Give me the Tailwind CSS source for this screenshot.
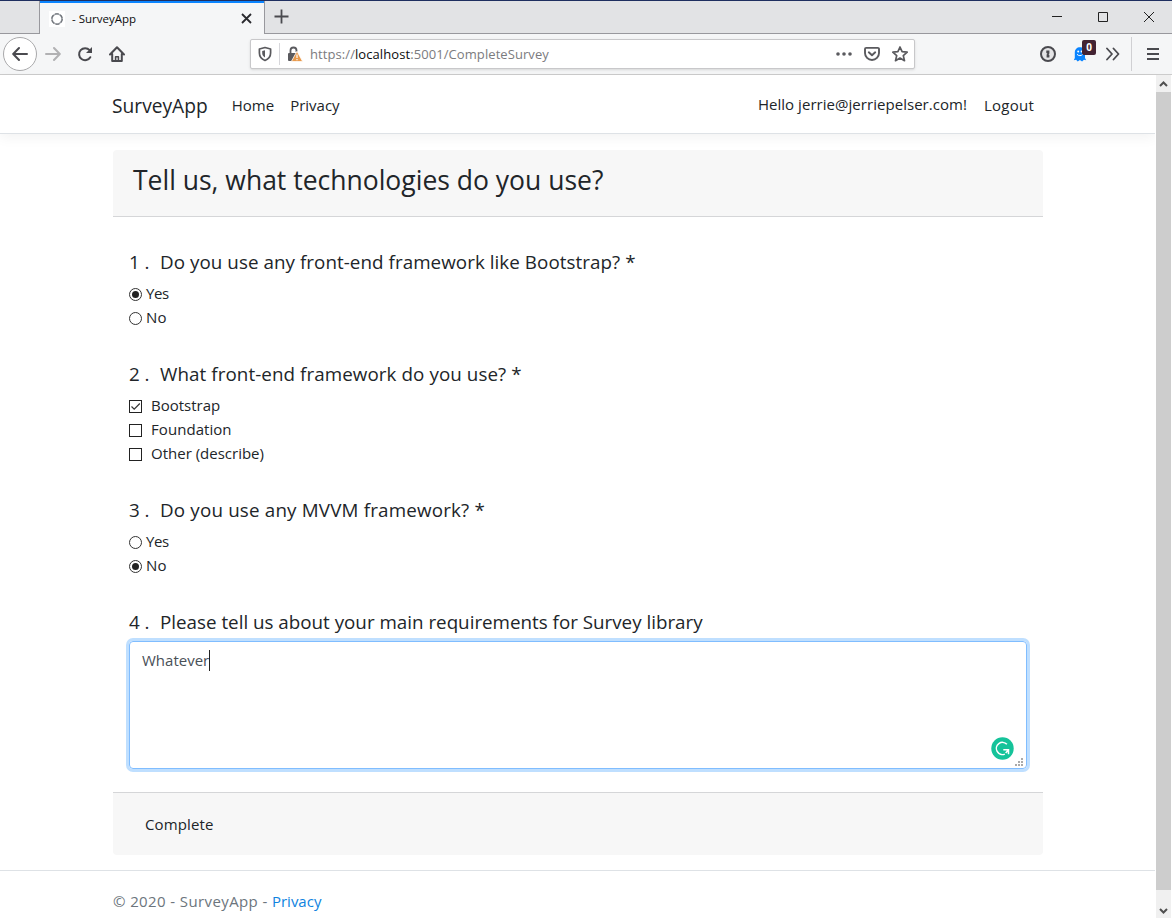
<!DOCTYPE html>
<html lang="en">
<head>
<meta charset="utf-8">
<title>SurveyApp</title>
<script src="https://cdn.jsdelivr.net/npm/@tailwindcss/browser@4"></script>
</head>
<body class="w-[1172px] h-[918px] overflow-hidden bg-white font-['Open_Sans',sans-serif] text-[15px] text-[#212529] flex flex-col">
  <!-- Tab strip -->
  <div class="h-[34px] shrink-0 flex bg-[#e2e3e5] border-t border-t-[#1f2f60]">
    <div class="w-10 border-b border-b-[#98989d] border-r border-r-[#98989d]"></div>
    <div class="w-[224px] bg-[#f5f6f7] border-t-2 border-t-[#0a84ff] flex items-center pl-[9px] pr-3">
      <svg class="w-4 h-4 bg-white" viewBox="0 0 16 16" fill="none"><circle cx="8" cy="8" r="5" stroke="#a9adb2" stroke-width="1.600"/><circle cx="8" cy="8" r="5.300" stroke="#6b6f75" stroke-width="1.100" stroke-dasharray="4 1.550"/></svg>
      <span class="ml-[7px] text-[11.5px] whitespace-nowrap text-[#0c0c0d]">- SurveyApp</span>
      <svg class="ml-auto w-[11px] h-[11px]" viewBox="0 0 11 11" stroke="#2a2a2e" stroke-width="1.800"><path d="M1 1l9 9M10 1l-9 9"/></svg>
    </div>
    <div class="flex-1 flex items-center border-b border-l border-[#98989d]">
      <svg class="ml-[9px] w-[15px] h-[15px] -mt-px" viewBox="0 0 15 15" stroke="#4a4a4f" stroke-width="1.800"><path d="M7.500 .5v14M.5 7.500h14"/></svg>
      <svg class="ml-auto w-[11px] h-[11px] -mt-px" viewBox="0 0 11 11" stroke="#222" stroke-width="1"><path d="M0 5.500h10"/></svg>
      <svg class="ml-[35px] w-[11px] h-[11px]" viewBox="0 0 11 11" fill="none" stroke="#222"><path d="M.5 .5h9v9h-9z"/></svg>
      <svg class="ml-[35px] mr-[17px] w-[11px] h-[11px]" viewBox="0 0 11 11" stroke="#222" stroke-width="1"><path d="M0 0l10 10M10 0L0 10"/></svg>
    </div>
  </div>
  <!-- Toolbar -->
  <div class="h-[41px] shrink-0 flex items-center bg-[#f5f6f7] border-b border-b-[#ccc]">
    <div class="ml-[3px] w-[34px] h-[34px] rounded-full bg-white border border-[#a9a9ab] flex items-center justify-center">
      <svg class="w-4 h-4" viewBox="0 0 16 16" fill="none" stroke="#4a4a4f" stroke-width="2" stroke-linecap="round" stroke-linejoin="round"><path d="M15 8H1.500M7 2L1.200 8 7 14"/></svg>
    </div>
    <svg class="ml-2 w-4 h-4" viewBox="0 0 16 16" fill="none" stroke="#b1b1b3" stroke-width="2" stroke-linecap="round" stroke-linejoin="round"><path d="M1 8h13.500M9 2l5.800 6L9 14"/></svg>
    <svg class="ml-4 w-4 h-4" viewBox="0 0 16 16" fill="none" stroke="#4a4a4f" stroke-width="2" stroke-linecap="round"><path d="M13.300 11.200A6 6 0 1 1 12.600 4.200"/><path d="M15 1v6H9z" fill="#4a4a4f" stroke="none"/></svg>
    <svg class="ml-4 w-4 h-4" viewBox="0 0 16 16" fill="none" stroke="#4a4a4f" stroke-width="2" stroke-linecap="round" stroke-linejoin="round"><path d="M1 8.500L8 1.200l7 7.300M3.200 8v7h9.600V8"/><path d="M6.600 15v-4.200h2.800V15" stroke-width="1.600"/></svg>
    <div class="ml-[125px] w-[665px] h-[30px] bg-white border border-[#c8c8ca] rounded-[2px] shadow-sm flex items-center">
      <svg class="ml-[6px] w-4 h-4" viewBox="0 0 16 16" fill="none" stroke="#5a5a5e" stroke-width="1.700" stroke-linejoin="round"><path d="M8 1.500L13.600 3v4c0 3.600-2 6-5.600 7.500C4.400 13 2.400 10.600 2.400 7V3z"/><path d="M8 4.300v7.200C6 10.400 5.200 9 5.200 7V5z" fill="#5a5a5e" stroke="none"/></svg>
      <div class="ml-[6px] w-px h-[22px] bg-[#d7d7db]"></div>
      <svg class="ml-[7px] w-4 h-4" viewBox="0 0 16 16"><path d="M3.500 8V4.500a3 3 0 0 1 6 0V6" fill="none" stroke="#5a5a5e" stroke-width="1.800"/><rect x="1" y="7" width="9" height="8" rx="1" fill="#5a5a5e"/><path d="M10 5.200L15.700 15.600H4.300z" fill="#e99a4c" stroke="#fff" stroke-width=".8"/><path d="M10 8.500v3.600M10 13v1.200" stroke="#fff" stroke-width="1.200"/></svg>
      <span class="ml-[7px] pt-[2px] text-[13px] tracking-[0.08px] whitespace-nowrap text-[#7b7b7e]">https://<span class="text-[#0c0c0d]">localhost</span>:5001/CompleteSurvey</span>
      <svg class="ml-auto w-4 h-4" viewBox="0 0 16 16" fill="#5a5a5e"><circle cx="2" cy="8" r="1.800"/><circle cx="8" cy="8" r="1.800"/><circle cx="14" cy="8" r="1.800"/></svg>
      <svg class="ml-3 w-4 h-4" viewBox="0 0 16 16" fill="none" stroke="#5a5a5e" stroke-width="1.900" stroke-linecap="round" stroke-linejoin="round"><path d="M2.200 1.900h11.600a1.200 1.200 0 0 1 1.200 1.200V7a7 7 0 0 1-14 0V3.100a1.200 1.200 0 0 1 1.200-1.200z"/><path d="M4.800 6.300L8 9.300l3.200-3"/></svg>
      <svg class="ml-3 mr-[6px] w-4 h-4" viewBox="0 0 16 16" fill="none" stroke="#5a5a5e" stroke-width="1.700" stroke-linejoin="round"><path d="M8 1l2.100 4.700 5.100.5-3.900 3.400 1.200 5.100L8 12l-4.500 2.700 1.200-5.100L.8 6.200l5.100-.5z"/></svg>
    </div>
    <svg class="ml-[125px] w-4 h-4" viewBox="0 0 16 16"><circle cx="8" cy="8" r="7" fill="#e4e4e6" stroke="#4a4a4f" stroke-width="2"/><path d="M6.300 4.500h3.100v3l-.8.800.8.800v2.400H6.600v-3l.8-.8-1.100-.8z" fill="#4a4a4f"/></svg>
    <div class="ml-[16px] relative w-4 h-4">
      <svg class="w-4 h-4" viewBox="0 0 16 16"><path d="M2.800 12V6.600C2.800 3.300 5 1.300 7.900 1.300s5.100 2 5.100 5.300V12l1.200 2.200-2.300-.4-1.800 1.700-2.200-1.500-2.200 1.500-1.600-1.700-2.300.4z" fill="#0a84ff"/><circle cx="6.200" cy="5.500" r="1" fill="#fff"/><circle cx="9.600" cy="5.500" r="1" fill="#fff"/><path d="M5 8.300c1.500 1.800 4.300 1.800 5.800 0" stroke="#fff" fill="none"/></svg>
      <div class="absolute left-[10px] -top-[6px] w-[14px] h-[15px] rounded-[2px] bg-[#432333] text-white text-[10px] font-bold leading-[15px] text-center">0</div>
    </div>
    <svg class="ml-[18px] w-[14px] h-[14px]" viewBox="0 0 14 14" fill="none" stroke="#4a4a4f" stroke-width="1.800" stroke-linecap="round" stroke-linejoin="round"><path d="M1 1.500L6 7l-5 5.500M7.500 1.500l5 5.500-5 5.500"/></svg>
    <div class="ml-[11px] w-px h-[34px] bg-[#d0d0d3]"></div>
    <svg class="ml-[15px] w-3 h-3" viewBox="0 0 12 12" stroke="#4a4a4f" stroke-width="2"><path d="M0 1h12M0 6h12M0 11h12"/></svg>
  </div>
  <!-- Page with its scrollbar -->
  <div class="flex-1 flex min-h-0">
    <div class="w-[1155px] flex flex-col">
      <header class="h-[59px] shrink-0 border-b border-b-[#dee2e6] shadow-[0_4px_12px_rgba(0,0,0,0.05)] flex items-center pl-[112px] pr-[121px] whitespace-nowrap">
        <span class="text-[19.200px] pt-[4px]">SurveyApp</span>
        <span class="ml-6 pt-[2px]">Home</span>
        <span class="ml-4 pt-[2px]">Privacy</span>
        <span class="ml-auto tracking-[0.040px]">Hello jerrie@jerriepelser.com!</span>
        <span class="ml-[17px] pt-[2px] tracking-[0.240px]">Logout</span>
      </header>
      <main class="mt-4 ml-[113px] w-[930px] whitespace-nowrap">
        <div class="h-[67px] bg-[#f7f7f7] border-b border-b-[#d5d6d8] rounded-t pl-5 pt-[10px]"><h3 class="text-[26.500px] leading-10">Tell us, what technologies do you use?</h3></div>
        <div class="h-[575px] px-4 pt-[30px]">
          <section class="h-[112px]">
            <h5 class="text-[18.800px] leading-[30px] flex"><span class="w-[31px]">1 .</span><span class="tracking-[0.060px]">Do you use any front-end framework like Bootstrap? *</span></h5>
            <div class="mt-[5px] h-6 flex items-center"><i class="w-[13px] h-[13px] rounded-full border border-[#333] flex items-center justify-center"><i class="w-[7px] h-[7px] rounded-full bg-[#222]"></i></i><span class="ml-1 pb-[2px] tracking-[-0.400px]">Yes</span></div>
            <div class="h-6 flex items-center"><i class="w-[13px] h-[13px] rounded-full border border-[#333]"></i><span class="ml-1 pb-[2px] tracking-[0.300px]">No</span></div>
          </section>
          <section class="h-[136px]">
            <h5 class="text-[18.800px] leading-[30px] flex"><span class="w-[31px]">2 .</span><span class="tracking-[0.080px]">What front-end framework do you use? *</span></h5>
            <div class="mt-[5px] h-6 flex items-center"><i class="w-[13px] h-[13px] border border-[#222] flex"><svg class="w-[11px] h-[11px]" viewBox="0 0 11 11" fill="none" stroke="#333" stroke-width="1.200"><path d="M1.500 5.500L4.200 8.200 9.800 2.500"/></svg></i><span class="ml-[9px] pb-[2px]">Bootstrap</span></div>
            <div class="h-6 flex items-center"><i class="w-[13px] h-[13px] border border-[#222]"></i><span class="ml-[9px] pb-[2px] tracking-[0.060px]">Foundation</span></div>
            <div class="h-6 flex items-center"><i class="w-[13px] h-[13px] border border-[#222]"></i><span class="ml-[9px] pb-[2px]">Other (describe)</span></div>
          </section>
          <section class="h-[112px]">
            <h5 class="text-[18.800px] leading-[30px] flex"><span class="w-[31px]">3 .</span><span class="tracking-[0.180px]">Do you use any MVVM framework? *</span></h5>
            <div class="mt-[5px] h-6 flex items-center"><i class="w-[13px] h-[13px] rounded-full border border-[#333]"></i><span class="ml-1 pb-[2px] tracking-[-0.400px]">Yes</span></div>
            <div class="h-6 flex items-center"><i class="w-[13px] h-[13px] rounded-full border border-[#333] flex items-center justify-center"><i class="w-[7px] h-[7px] rounded-full bg-[#222]"></i></i><span class="ml-1 pb-[2px] tracking-[0.300px]">No</span></div>
          </section>
          <section>
            <h5 class="text-[18.800px] leading-[30px] flex"><span class="w-[31px]">4 .</span><span>Please tell us about your main requirements for Survey library</span></h5>
            <div class="mt-1 h-[128px] relative rounded border border-[#80bdff] shadow-[0_0_0_3px_#bfdfff] px-3 pt-[6px] text-[#495057] flex">
              <span class="h-6 leading-6">Whatever</span><i class="w-px h-[21px] mt-[2px] bg-[#222]"></i>
              <svg class="absolute right-3 bottom-2 w-[23px] h-[23px]" viewBox="0 0 23 23"><circle cx="11.500" cy="11.500" r="11.200" fill="#15c39a"/><path d="M15.900 7.300A6.100 6.100 0 1 0 13.800 17.100" fill="none" stroke="#fff" stroke-width="1.500"/><path d="M12.300 12.800h5.200v4.400M17.300 13l-2.600 3" fill="none" stroke="#fff" stroke-width="1.500"/></svg>
              <svg class="absolute right-[3px] bottom-[2px] w-2 h-2" viewBox="0 0 8 8" fill="#aaa"><path d="M6 0h2v2H6zM3 3h2v2H3zM6 3h2v2H6zM0 6h2v2H0zM3 6h2v2H3zM6 6h2v2H6z"/></svg>
            </div>
          </section>
        </div>
        <div class="h-[63px] bg-[#f7f7f7] border-t border-t-[#d5d6d8] rounded-b pl-[32px] flex items-center"><span class="tracking-[0.120px]">Complete</span></div>
      </main>
      <footer class="mt-[15px] h-[48px] border-t border-t-[#dee2e6] pl-[113px] leading-[60px] text-[#6c757d] whitespace-nowrap"><span class="tracking-[0.390px]">© 2020 - SurveyApp - </span><span class="text-[#0f83e0]">Privacy</span></footer>
    </div>
    <div class="w-[17px] pl-px flex flex-col bg-white">
      <div class="w-[15px] h-[17px] bg-[#f0f0f0] flex items-center justify-center"><svg class="w-[9px] h-[6px]" viewBox="0 0 9 6" fill="none" stroke="#505050" stroke-width="2"><path d="M1 5l3.500-3.500L8 5"/></svg></div>
      <div class="w-[15px] flex-1 bg-[#cdcdcd]"></div>
      <div class="w-[15px] h-7 bg-[#f0f0f0] flex justify-center pt-[18px]"><svg class="w-[9px] h-[6px]" viewBox="0 0 9 6" fill="none" stroke="#505050" stroke-width="2"><path d="M1 1l3.500 3.500L8 1"/></svg></div>
    </div>
  </div>
</body>
</html>
